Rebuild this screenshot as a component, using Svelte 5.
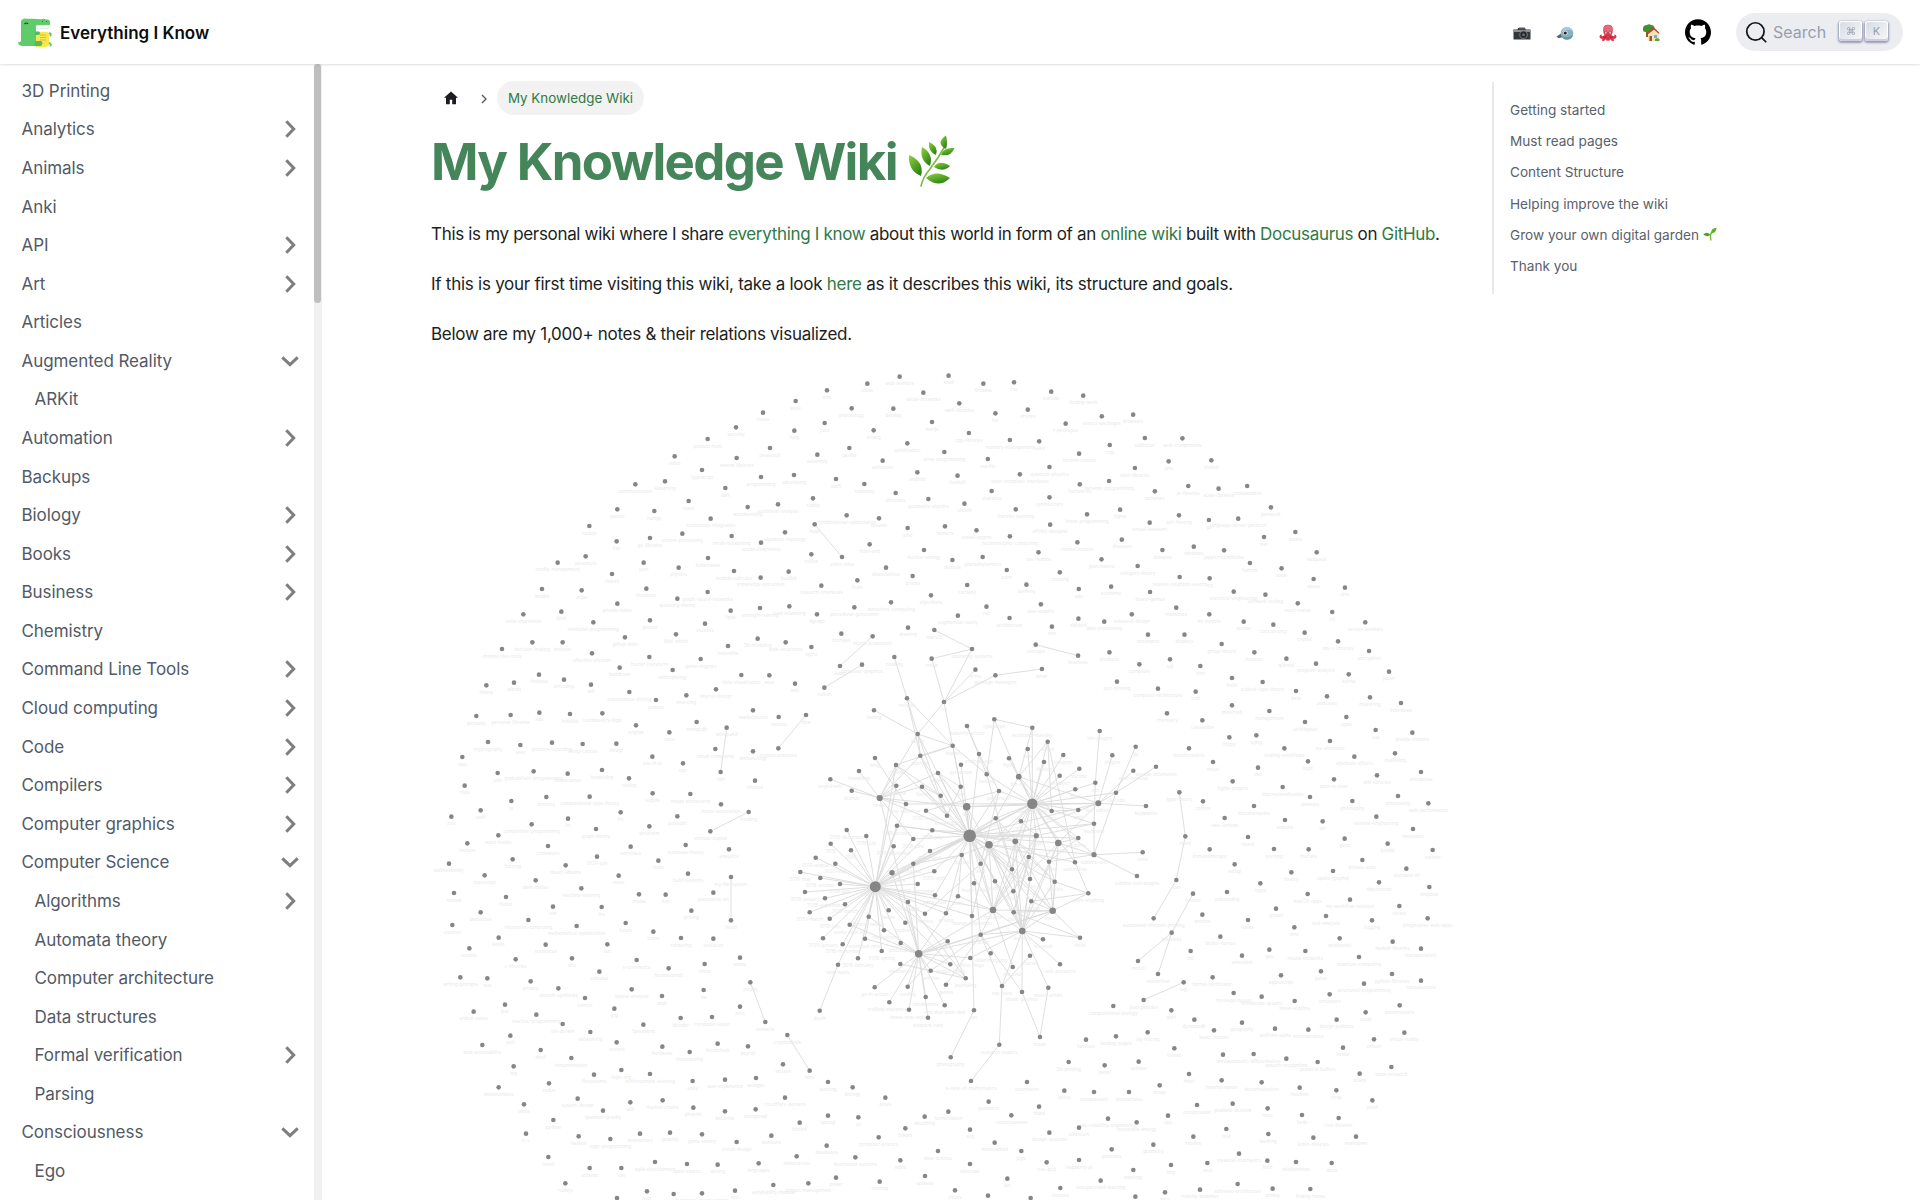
<script>
  // Sidebar entries: [label, state, depth]; state is '>' closed, 'v' open, '' for a leaf page.
  const pages = [
    ['3D Printing', '', 0], ['Analytics', '>', 0], ['Animals', '>', 0], ['Anki', '', 0],
    ['API', '>', 0], ['Art', '>', 0], ['Articles', '', 0], ['Augmented Reality', 'v', 0],
    ['ARKit', '', 1], ['Automation', '>', 0], ['Backups', '', 0], ['Biology', '>', 0],
    ['Books', '>', 0], ['Business', '>', 0], ['Chemistry', '', 0], ['Command Line Tools', '>', 0],
    ['Cloud computing', '>', 0], ['Code', '>', 0], ['Compilers', '>', 0], ['Computer graphics', '>', 0],
    ['Computer Science', 'v', 0], ['Algorithms', '>', 1], ['Automata theory', '', 1],
    ['Computer architecture', '', 1], ['Data structures', '', 1], ['Formal verification', '>', 1],
    ['Parsing', '', 1], ['Consciousness', 'v', 0], ['Ego', '', 1]
  ];

  const toc = ['Getting started', 'Must read pages', 'Content Structure', 'Helping improve the wiki', 'Grow your own digital garden', 'Thank you'];

  // Notes of the outer ring, grouped by sector. Each entry is "x y name" in sector units.
  const sectors = [
    { x: 430, y: 360, sx: 3, sy: 3, notes: `1409 50 web-workers,1312 71 cities,1191 91 cms,1097 123 work,999 158 russia,918 202 security,833 237 product-hunt,734 289 video,616 373 communication,705 364 streaming,816 330 typescript,920 294 swarm-libraries,1020 264 javascript,1093 212 ruby,1184 189 julia,1265 145 psychology,1390 146 datalog,1480 98 social-networks,1506 186 nextjs,1331 211 erlang,1432 250 serialization,1258 264 gatsby,1162 284 assembly,1358 302 antimatter,1543 276 array-programming,1462 337 android,1303 372 rabbitmq,1218 357 swift,1092 345 advertising,993 351 programming,886 384 dart,776 423 react,673 453 numpy,562 448 planes,478 498 nodejs,560 544 lisp,660 534 go-libraries,757 521 stream-processing,842 476 continuous-integration,953 441 woodworking,1044 433 sentiment-analysis,1149 415 caddy,1397 399 directors,1495 417 geometric-algebra,1250 466 combinational-optimization,1347 475 russian,1433 504 amd,1545 499 humans,1154 493 hugo,1236 591 static-sites,1319 553 front-end,1065 517 algebraic-topology,993 548 xcode-extensions,905 528 mesh-networking,834 594 kubernetes,746 623 physics,641 608 json,467 589 adventure,383 608 config-management,546 642 clojure,455 691 expo,336 687 webkit,280 763 voice-assistance,394 755 blink,562 731 private-notes,649 686 mentions,742 716 queueing-theory,833 696 graph-neural-networks,912 633 lambda-calculus,992 653 knowledge-extraction,1076 635 buildkit,1144 583 coffee,1482 570 nuclear-energy,1368 623 dissociatives,1448 648 prisma,1282 661 fruits,1174 677 research-chemicals,1503 706 algorithms,1383 727 serverless-computing,1273 742 procedural-generation,1161 763 dgraph,1078 739 load-balancing,990 744 strength-training,902 752 fpga,825 791 success,738 823 little-snitch,660 781 gentoo,490 787 relational-programming,585 832 github-bots,398 847 phoenix,307 847 decision-making,216 867 chrome-dev-tools,486 880 effective-altruism,658 891 fourier-transform,812 897 game-engines,894 858 instantlite,983 836 3d-modeling,1067 847 data-structures,1144 861 nginx,1234 821 biomass,1434 803 drawing,1328 829 music-production,1230 918 audio,1296 914 computer-graphics,1183 983 vulkan,1513 810 macOS,1505 896 nmap,1393 891 cooking,1095 971 wiki,1018 946 avex,934 945 data-visualization,728 930 anthropology,569 923 buddhism,402 959 encoding,327 944 firebase,252 968 wikidq,169 976 hiking,483 974 wifi,858 988 interior-design` },
    { x: 930, y: 360, sx: 2.904, sy: 3, notes: `54 47 shell,155 71 firebase,244 67 rss,352 95 canada,445 107 finding-work,85 130 swift-libraries,190 160 lux,284 149 drones,394 191 r-packages,499 169 emacs-packages,590 164 browsers,113 219 cpp-libraries,232 240 memory-management,317 244 haiku,522 255 cnjs,624 234 addiction,733 235 web-components,433 281 version-control,168 297 nutrilio,347 321 quantum-physics,595 324 elixir-libraries,693 304 pho,817 301 visited,80 347 haskell,261 343 brain-computer-interfaces,435 373 fuchsia-os,520 363 dynamic-programming,179 393 statistics,347 412 synthesizers,653 394 rectorsec,750 378 js-libraries,838 386 scala-libraries,921 378 codesandbox,100 431 sketch,249 448 transfer-learning,456 463 linear-programming,552 449 figma,723 466 self-hosting,810 480 go,895 476 language-server-protocol,990 442 jamstack,135 511 unreal-engine,349 494 affinity-designer,638 488 virtual-assistant,232 529 neuromorphic-computing,428 547 mental-models,557 539 diseases,970 531 osx,1061 516 books,65 600 devices,153 591 phenethylamines,315 577 css-flexbox,675 570 domains,766 560 windows,854 571 jupyter-notebooks,1123 577 webpack,498 598 governance,603 618 category-theory,929 609 fathom,1021 625 dask,223 630 color,377 637 zooning,725 651 nearest-neighbor-search,812 655 tcp,1114 657 space,108 675 cardano,280 674 banking,432 687 edo,526 680 economy,1205 683 unix,639 696 board-games,882 695 electrical-engineering,974 704 software-testing,164 740 zsh,322 733 aws-amplify,1068 730 react-native,1168 756 tcl,715 743 memories,81 767 augmented-reality,231 774 architecture,431 776 shaders,506 785 data-processing,586 763 industrial-design,811 763 ml-models,911 785 docker,997 794 concurrency,1264 787 service-workers,354 800 dna,633 824 nootropics,739 824 displays,1088 818 crystal,1185 844 obj-c-libraries,307 854 startups,430 887 business,847 852 group-theory,122 867 operating-systems,521 877 products,942 877 notation,1275 873 encryption,697 898 sql,1035 896 queries,1121 911 program-analysis,608 913 compilers,785 918 zinc,132 929 lamia,325 927 brew,190 946 package-managers,877 954 trello,1216 943 kernel,1333 935 japan,966 966 cubical-type-theory,543 965 pen-plotting,662 986 computer-architecture` },
    { x: 430, y: 690, sx: 3, sy: 3, notes: `598 6 autonomous-driving,678 30 politics,769 16 investing,139 78 germany,242 75 personal-libraries,328 68 ada,420 72 hotellist,517 70 combinatory-logic,618 106 english,718 127 rocs,800 96 mongodb,890 113 wireguard,969 61 marketplaces,1046 81 tattoos,1128 75 libra,174 156 cryptography,271 165 java,366 158 process-recording,458 162 along-coreos,559 161 dvwgi,97 201 aoo,667 200 css-in-js,759 220 ego,856 177 cloud-computing,969 184 immunology,1045 175 cryptocurrencies,203 249 elm,311 244 probabilistic-programming,413 251 nanoscience,516 240 leadership,597 265 vuelog,872 246 vpn,975 272 clothes,104 287 rfids,668 310 svgtile,781 312 image-processing,244 333 qt,349 321 postrice,479 320 computational-type-theory,873 343 home-automation,152 361 swift,64 380 zsls,414 386 iot,572 367 irc,742 379 polkadot,956 366 funding,305 403 competitive-programming,498 417 graph-theory,658 409 terraform,841 424 venture-capital,205 436 react-hooks,112 460 rockets,354 468 containers,602 470 exercises,767 465 automata-theory,897 478 analytics,248 508 fuzzing,501 500 2020-july,685 512 redis,57 521 webassembly,407 526 music-albums,164 556 purescript,566 557 nixos,774 551 build-systems,903 561 my-file-system,317 571 dark-matter,454 595 machine-learning,72 609 nomad,627 613 media,707 614 lisn,850 608 generative-art,228 621 flutter,369 650 ssh,515 651 lira,784 662 pricing,152 667 deduction,295 690 interactive-computing,903 691 hazel,67 705 election,440 708 mathematical-optimization,587 699 future,670 725 icons,206 743 kotlin,753 744 rendering,850 746 evolution,118 775 ansible,347 764 sentences,532 763 lex,257 808 c-libraries,426 805 dns,620 810 e-commerce,930 803 anime,716 835 foundationdb,824 822 virtue,508 845 calculus,91 862 writing-prompts,172 865 rust,302 874 privacy,961 877 events,385 895 speech-synthesis,605 898 spatial-analysis,821 900 tla,696 918 mqtt,465 924 cancer,225 944 jest,930 950 arkit,553 956 jpg,131 965 united-states,319 974 reactive-programming,752 984 blender,846 981 computer-vision,398 1002 ios-derwin,640 1004 1password,1006 996 contacts,481 1026 networking,241 1037 perl,1072 1035 cryptominds,157 1065 web-accessibility,560 1057 vectors,697 1070 hardware,863 1061 blockchain,954 1069 payroll,332 1080 dhall,779 1086 microdosing,424 1104 documentation,1059 1123 viruses,251 1129 big,574 1140 logic-org,492 1154 filesystems,660 1152 reinforcement-learning,788 1173 unity,885 1169 user-experience,978 1164 webgpu,357 1180 redux,206 1192 bookmarklets,1065 1223 cloudflare-workers,443 1226 system-design,601 1237 wifi,698 1231 markov-chains,282 1243 taxes,790 1253 phoenix,519 1262 quantum-gravity,885 1264 batteries,977 1258 postgresql,370 1290 python,1109 1298 bitcoin,288 1331 c++,446 1339 haskell,541 1347 logic-programming,630 1331 newsletters,720 1328 graphql,816 1333 game-theory,1024 1337 sismetrix,920 1356 circuit-design,355 1401 travel,1100 1399 tailwind-css,479 1434 scheme,574 1434 css,675 1416 agile-development,771 1422 open-source,863 1424 writing,986 1420 languages,406 1480 nodejs,1030 1485 satisfiability-modulo,651 1504 rsdz,915 1502 rust,731 1512 vim,816 1510 functional-programming,561 1524 linux` },
    { x: 1140, y: 690, sx: 3, sy: 3, notes: `167 5 crdt,468 3 beta,561 19 podcasts,690 22 mastering,783 39 interviews,81 70 chemistry,276 46 minecraft,388 63 management,187 91 cassandra,495 96 activitypub,619 81 agda,707 120 vue,817 128 google-chrome,268 142 trippy,349 136 aging,570 153 ios-shortcuts,147 175 bioinformatics,433 175 making-workflows,765 190 marketing,643 200 algebraic-effects,219 216 metal,504 214 logic,354 233 css,843 246 wordpress,711 256 elm-libraries,582 268 peer-to-peer,278 274 figma-plugins,428 291 internationalization,118 307 type-theory,510 321 datasets,774 318 processing,189 334 comics,637 333 philosophy,865 340 web-performance,342 348 documentaries,254 384 aws-lambda,709 380 reverse-engineering,435 390 arduino,548 394 tax,819 417 mastodon,136 439 imeni,324 441 neo4j,614 446 geod,743 461 gatsby,209 478 immunotherapy,402 477 learning,506 478 fractals,878 480 outliner,667 510 private-suite,284 523 webgl,799 536 standard-ml,579 543 apollo-graphql,454 547 history,109 570 lean,361 580 logos,717 577 objectscript,868 591 dropbox,159 611 futures,261 606 onboarding,503 612 macOS-apps,630 629 my-workflow-notation,778 648 racket,408 656 groaci,187 674 articles,558 678 real-analysis,41 685 automated-theorem-proving,324 690 kafka,696 691 logging,863 685 progressive-web-apps,463 712 time,95 728 networks,241 740 bezier-curves,599 745 websocket,758 755 haskell-libraries,152 783 mit,388 779 gpu,496 783 neural-networks,843 776 transportation,306 797 animation,657 801 quantum-computing,543 844 guitar,54 852 tensorflow,218 862 formal-verification,423 856 applescript,756 852 python-libraries,131 877 sap,672 881 structured-programming,843 872 consultancies,281 909 message-queue,365 920 knowledge-graphs,569 913 emulators,11 930 lysergamides,464 933 linear-algebra,779 946 presentations,94 961 iperf,677 967 study,163 989 dynamodb,306 998 geography,590 989 design-patterns,222 1021 basic-income,405 1016 wolfram-alpha,505 1019 microservices,793 1028 virtual-reality,23 1027 ray-tracing,702 1048 unison,103 1075 framer,609 1073 twitter,249 1094 drinks,341 1092 automatic-differentiation,439 1106 speech-recognition,533 1116 protocol-buffers,754 1131 roam-research,147 1152 hotel,659 1151 ocaml,245 1171 hammerspoon,365 1177 decentralization,59 1186 drugs,479 1193 freedom,589 1201 ocsp,697 1231 jekyll,278 1241 gradient-descent,171 1245 compression,383 1255 mice,486 1275 bash,84 1277 cpu,596 1284 rust-libraries,259 1317 rest,385 1332 bashing,160 1340 movies,520 1343 kotlin-libraries,648 1340 markdown,40 1364 geometry,297 1391 classical-mechanics,382 1412 forth,202 1419 saul,468 1416 relationships,575 1419 deno,93 1425 http,293 1482 software-architecture,398 1496 prolog,180 1499 making-websites,511 1497 finding-home,75 1507 pico` },
    { x: 790, y: 990, sx: 3, sy: 3, notes: `59 242 html,114 276 dancing,188 292 biology,286 323 pirsls,888 149 furniture,978 139 landing-pages,836 216 3d-printing,944 226 bazel,1046 215 scholar,711 276 automation,823 302 valves,912 306 compression,1017 306 prometheus,596 335 genomics,747 350 clubs,475 365 fermentation,664 376 consciousness,404 380 sketching,205 382 cli,114 377 opengl,346 415 linkers,540 419 svg,954 386 site-reliability-engineering,1040 397 renewable-energy,867 413 ethereum,778 428 design-systems,266 442 computer-science,614 458 memcached,110 467 databases,694 483 pgtc,444 483 data-science,965 478 gamedev,196 502 distributed-systems,331 511 sqlite,540 522 inkscape,770 517 css-grid,867 510 raspberry-pi,1030 540 topology,138 563 power,405 558 updates,55 580 project-management,269 575 running,652 566 tax,932 572 unsupervised-learning,811 594 courses,495 601 chess,594 617 go,722 624 math,1036 620 music` }
  ];

  const notes = sectors.flatMap((s) =>
    s.notes.split(',').map((line) => {
      const [x, y, name] = line.trim().split(' ');
      return { x: s.x + x / s.sx, y: s.y + y / s.sy, name };
    })
  );

  // Linked notes in the middle: "x y name radius".
  const core = `907 698.3 recipes,944 702 nix,874 710.3 fasting,917.7 734 health,952.7 745.7 vogues,967 726 butterfly-school,979 754 podcast-app,920.3 755.7 nutrition,961 764.7 gyroscope,896 765 cycling,875 758 blog,938 773 looking,859 771 travelblog,830.3 779.3 englishwiki,851.7 790.7 biohub,896.3 785.7 medicine,922 786.7 focus,960.7 786.7 note,940.7 795.7 ideas,879.7 798 health 3.1,906 804 my-workflow,966.7 806.7 wiki 3.8,926 810.7 2018-august,947 815.7 knowledge,969.7 835.7 journal 6.3,989 844.7 ios 3.8,995.7 818.3 tools,999 791 powerlevel,897 825.7 2018-october,932.3 830.3 2018-july,913.3 839 2018-june,893.7 846.3 2018-december,930 851 2020-april,961.7 855 quotes,846.7 830 2018-december,866.3 836 2019-july,830.7 843.7 2019,851 850.3 2020,815.7 857.7 2019-august,994.3 719.3 typescript,986.7 774.3 fantasy,1032.3 727.7 keyboard-maestro,1047.7 741.7 alfred,1027.7 749 mpv,1009 758.3 figma,1044 762 discord,1063.3 755 telegram,1079.3 768.7 vscode,1059.7 775.7 karabiner,1018.7 776.7 tim-reh 2.9,1075.3 789.3 bear,1095.3 782.7 vim,1099.7 731 vim-plugins,1112.3 755.3 plugins,1135.7 746.7 go,1133.3 770.7 sync-hotkeys,1156 766.7 vscode-extensions,1116 792.7 vs-code,1098.3 803.3 text-editors 3,1032.3 803.7 macOS-apps 5.2,1146 806 keyboards,1051.7 811 trace,1078.3 810 unix,1021 821.3 github,1094 823.7 keyboard,1036.3 835.7 design 2.6,1015.3 841.3 apps 2.9,1058.3 843 ios-apps 3.3,1078.3 838 sublime,1028.7 857 editors,1094 854.7 sublime-text 2.6,1142.7 852.3 latex,835.3 863.7 2020-may,800.3 872 2019-may,820.3 878 2018-october,840 884 2019-june,875.3 886.7 looking-back 5.5,892 872.7 2018-books 2.7,913.3 863.7 movies,934.3 871.3 2020-april,917.7 884 2019-december,805 892 2019-january,825 898.3 2018-september,845 904.3 2019-march,908 902 2019-april,935 895.3 apps-i-use,958 896.3 email,974 883.3 music-i-like,980.7 863.7 work,995 881.3 reading,993 910 research 3.3,972 916 design-inspiration,946 913.3 writing,925 913.7 curious,888.7 910.3 habits,868.7 916.7 twenty-twenty,809.7 912.3 2020-march,829.7 918.7 2018-july,849.7 924.7 sanity-educate,905.3 922.7 podcasts,884 930.3 meditation,865 938.7 extended-mind,900.7 943 philosophy,823 938.3 2020-january,842.7 944.3 2018-november,881.7 951 2018-spring,858 958.3 2019-february,838 964.7 alan-watts,918.7 953.7 books 3.8,947.7 941.3 2018,980.7 934.7 articles,990.7 953.3 video-blogging,970.3 958 online-blogs,950.3 964.3 quotes-citing,930.7 970.7 articles,900.3 964 meditation,965.7 978.3 journaling,946 984.7 games,907.7 986.7 reading,874.7 987.3 go-in-action,925.7 997 mindstorms,889.3 1002.3 crafting-interpreters,909 1009.7 brave-new-world,944.7 1005.3 rich-dad-poor-dad,928 1017.7 eloquent-ruby,974 1010.3 art,819.7 1010.7 death,1049 861.7 sublime,1075 862.3 automation,1012 869.3 sharing,1030 879 notes,1054.7 881.7 articles,1013.3 891.3 blogs,1031.3 901.3 courses,1013.7 912.3 ideas,1052.7 910.7 macOS 3.3,1088.3 893.3 learn-anything,1022.3 931 learning 3.3,1080 937.7 trello,1043 939.3 research,1060 964.3 web-presence,1030 955.7 courses,1012.7 967 my-code,1002 986 soy-traits,1022 992 music-playlists,1048.3 987.7 music-artists,1137 876 sublime-text-plugins,1113.3 1006 computational-biology,1138 961 model,950.7 1057.3 photography,999.3 1044.7 research-papers,971 1081 a-view-of-mathematics,1040 1037 music`
    .split(',')
    .map((line) => {
      const [x, y, name, r] = line.split(' ');
      return { x: +x, y: +y, name, r: r ? +r : 2.3 };
    });

  // Adjacency of the linked notes, by position in the list above.
  const adjacency = {
    24: '21 17 18 11 23 22 16 29 30 32 33 28 77 76 78 79 25 66 65 26 27 59 88 89 91 85 6 7 3 67 58 131 90 134 110 64 68 8 125',
    76: '34 35 36 37 38 72 73 74 75 81 82 83 96 97 98 103 104 106 107 95 101 100 105 94 102 99 84 93 92 85 80 79 78 77 31 30 28 20 15 32 29 109 91 90 9 59 25 26',
    59: '41 42 43 44 45 46 47 48 49 50 51 57 58 61 62 63 64 65 66 26 27 40 21 25 67 68 70 20 129 88 131 69 128 78',
    108: '77 78 84 95 98 101 102 109 110 90 112 113 114 118 119 121 122 120 123 124 116 137 135 19 86',
    137: '25 66 129 130 132 133 134 135 131 110 139 140 145 143 144 138 67 65 90 24',
    135: '67 66 25 24 136 133 134 138 131 127 90 110',
    90: '25 66 33 67 65 129 69 142 86 110 21',
    58: '60 53 55 49 67 25 21 57',
    57: '54 56 70',
    51: '52 64',
    70: '64 71 146 127 67 25',
    19: '13 14 12 3 9 7 11 16 21 20 30 15 24',
    3: '0 7 4 2 23 1',
    4: '0 7 40 9 17',
    1: '17',
    7: '0 23',
    39: '41 40 49',
    49: '41 42 26 67 61',
    5: '6 40', 10: '20', 9: '23 18', 11: '21 17', 6: '27', 17: '23', 16: '18 23',
    125: '149', 150: '143 151', 152: '144 145', 126: '107',
    143: '110 141', 144: '110', 116: '84 109 114', 114: '115 110', 117: '110', 118: '109',
    136: '128 133 131', 138: '134', 33: '78 86 92', 129: '24 26 66', 132: '69 21 25', 130: '66 65',
    131: '69 26', 127: '68 66', 133: '67 25', 134: '69 65', 91: '25', 65: '29 63 64', 128: '25 42',
    68: '67', 61: '62 42', 28: '29', 22: '27', 40: '129', 113: '76', 112: '137', 88: '93 27'
  };
  const links = Object.entries(adjacency).flatMap(([from, to]) =>
    to.split(' ').map((t) => [core[from].x, core[from].y, core[t].x, core[t].y])
  );

  // Small separate chains around the middle.
  const chains = [
    [814.7, 524.3, 842, 557], [872.7, 636.3, 840, 666], [862, 664.7, 824.3, 687.7],
    [894.3, 657, 907, 698.3], [934.3, 630, 972, 649], [931.7, 658.7, 972, 649],
    [931.7, 658.7, 944, 702], [972, 649, 944, 702], [975.5, 669.7, 944, 702], [995.4, 675.3, 944, 702],
    [995.4, 675.3, 1041.9, 669], [1035.7, 644.7, 1078, 655.7], [806, 715, 778.3, 748.3],
    [726.7, 727.7, 720.7, 772], [748.7, 812, 710.3, 831.3], [731, 877, 731, 920.3],
    [750.3, 982.3, 765.3, 1022], [787.3, 1035, 809.7, 1070.7], [1179.3, 792.3, 1185.3, 836.3],
    [1185.3, 836.3, 1176.3, 880], [1176.3, 880, 1153.7, 918.3], [1193, 893.7, 1171.7, 932.7],
    [1171.7, 932.7, 1138, 961], [1171.7, 932.7, 1158, 974], [1183.7, 982.3, 1143.7, 1000]
  ];
  const edges = [...links, ...chains];
</script>

<header class="navbar">
  <a class="brand" href="#top">
    <svg class="logo" viewBox="0 0 34 30" width="34" height="30">
      <path d="M3 4Q3 1 5 1.200 6 0 8 .8h6l9 .4q3-1 5 .3 4-.5 4 2.500v3H21q-3 1-3 4v10l6 4-3 3H5q-5 0-5-4 2 .5 3-1Z" fill="#60cb6b" />
      <path d="M18 14h11q2 0 2 3v9q0 3-4 3h-9Z" fill="#f6e84d" />
      <path d="M22 17h6M22 19.500h6M22 22h6" stroke="#d8b63a" stroke-width=".9" />
      <path d="M18 8l1-1 1.500 1 1.500-1 1.500 1 1.500-1 1.500 1 1.500-1 2 1v2.500H19q-1-1-1-2.500Z" fill="#fff" stroke="#c9d9cb" stroke-width=".5" />
      <path d="M6.500 6q2-2 3.500 0" fill="none" stroke="#1b3b1e" stroke-width="1.200" />
      <path d="M24 3.500h1M28 3.500h1" stroke="#2d8138" stroke-width="1" />
      <path d="M17 13.500h4q2 1.500 0 3.500h-4ZM17 23h6q3 2 0 5h-7Z" fill="#52bd5f" />
      <path d="M31 15q3 1 1 3M31 25q3 1 1 3" stroke="#60cb6b" stroke-width="2" fill="none" />
    </svg>
    <span>Everything I Know</span>
  </a>
  <nav class="tools">
    <svg class="emoji" viewBox="0 0 18 18" width="18" height="18">
      <path d="M.5 5.500h4L5 4h7l.8 1.500H17q.5 0 .5.500v9q0 .5-.5.500H1q-.5 0-.5-.5Z" fill="#34373a" />
      <path d="M.5 6h17v2H.5Z" fill="#8d9194" /><path d="M6 3.500h6v2H6Z" fill="#55585b" />
      <circle cx="10.500" cy="10.700" r="4.300" fill="#74777a" /><circle cx="10.500" cy="10.700" r="3.200" fill="#25272a" /><circle cx="10.500" cy="10.700" r="1.500" fill="#62686f" />
    </svg>
    <svg class="emoji" viewBox="0 0 18 18" width="18" height="18">
      <path d="M.5 12.500 6 9l1.500 4-5 1.300Z" fill="#58646c" />
      <circle cx="11" cy="9.300" r="6.300" fill="#86b1bf" /><path d="M5 9q2-6 7-6 4 1 5 5-2-3-6-2-4 1-6 3Z" fill="#a9ccd6" />
      <path d="M5.500 12q5 3 11.500-1-1 4.500-6 4.700-4 0-5.500-3.700Z" fill="#6797a8" />
      <circle cx="9.500" cy="9" r="2.200" fill="#e4ecee" /><circle cx="9.300" cy="9" r="1.500" fill="#1d2327" />
    </svg>
    <svg class="emoji" viewBox="0 0 18 18" width="18" height="18">
      <path d="M9 .8q5 0 4.800 5 0 3-1.300 5.200 1 1.500 3 1l-.3-1.500q2.300 0 2.300 2T14.500 15q1 1 .3 2-2 .5-3.300-1.800Q10 17.500 9 16.500 8 17.500 6.500 15.200 5.200 17.500 3.200 17q-.7-1 .3-2Q.5 14.500.5 12.500t2.300-2L2.500 12q2 .5 3-1Q4.200 8.800 4.200 5.800 4 .8 9 .8Z" fill="#d9374b" />
      <path d="M9 1q4.500 0 4.300 4.500Q13 8 9 8T4.700 5.500Q4.500 1 9 1Z" fill="#e5697a" />
      <circle cx="7" cy="9" r="1" fill="#fff" /><circle cx="11" cy="9" r="1" fill="#fff" /><circle cx="7.100" cy="9.100" r=".6" fill="#222" /><circle cx="10.900" cy="9.100" r=".6" fill="#222" />
      <path d="M4 13q3 2 3-1M14 13q-3 2-3-1" stroke="#9f1b35" stroke-width=".8" fill="none" />
    </svg>
    <svg class="emoji" viewBox="0 0 18 18" width="18" height="18">
      <path d="M4 8h2v5H4Z" fill="#8a5a36" /><path d="M1 4.500Q1 1 5 1q2-1.500 4 0 3 0 3.500 3L9 8H3Q.5 7.500 1 4.500Z" fill="#43902c" />
      <path d="M6 9l6-4.500L17 9v8H6Z" fill="#f6e5b8" /><path d="M4.800 9.500 11 4l1-.5L17.500 9l-.8.8L12 5.500 5.600 10.500Z" fill="#c3372c" />
      <path d="M7.500 12h2.500v5H7.500Z" fill="#9a5a30" /><path d="M12 11h3v3h-3Z" fill="#6cb2d6" />
      <path d="M13 15q2-1.500 4.500 0V17H13Z" fill="#58a635" />
    </svg>
    <svg class="github" viewBox="0 0 24 24" width="26" height="26"><path d="M12 .297c-6.630 0-12 5.373-12 12 0 5.303 3.438 9.800 8.205 11.385.6.113.82-.258.82-.577 0-.285-.01-1.040-.015-2.040-3.338.724-4.042-1.610-4.042-1.610C4.422 18.070 3.633 17.700 3.633 17.700c-1.087-.744.084-.729.084-.729 1.205.084 1.838 1.236 1.838 1.236 1.070 1.835 2.809 1.305 3.495.998.108-.776.417-1.305.76-1.605-2.665-.3-5.466-1.332-5.466-5.930 0-1.310.465-2.380 1.235-3.220-.135-.303-.54-1.523.105-3.176 0 0 1.005-.322 3.300 1.230.96-.267 1.980-.399 3-.405 1.020.006 2.040.138 3 .405 2.280-1.552 3.285-1.230 3.285-1.230.645 1.653.24 2.873.12 3.176.765.84 1.230 1.910 1.230 3.220 0 4.610-2.805 5.625-5.475 5.920.42.36.81 1.096.81 2.220 0 1.606-.015 2.896-.015 3.286 0 .315.21.690.825.570C20.565 22.092 24 17.592 24 12.297c0-6.627-5.373-12-12-12" /></svg>
    <button class="search">
      <svg viewBox="0 0 20 20" width="24" height="24"><path d="M14.386 14.386l4.088 4.088-4.088-4.088c-2.942 2.942-7.711 2.942-10.653 0s-2.942-7.711 0-10.653 7.711-2.942 10.653 0 2.942 7.711 0 10.653z" fill="none" stroke="#111418" stroke-width="1.500" stroke-linecap="round" /></svg>
      <span class="placeholder">Search</span>
      <kbd><svg viewBox="0 0 10 10" width="8" height="8"><path d="M3.500 3.500V2A1.500 1.500 0 1 0 2 3.500h6A1.500 1.500 0 1 0 6.500 2v6A1.500 1.500 0 1 0 8 6.500H2A1.500 1.500 0 1 0 3.500 8Z" fill="none" stroke="#969faf" stroke-width="1.100" /></svg></kbd>
      <kbd>K</kbd>
    </button>
  </nav>
</header>

<div class="layout">
  <aside class="sidebar">
    <ul>
      {#each pages as [label, state, depth]}
        <li class:nested={depth === 1}>
          <span>{label}</span>
          {#if state}
            <svg class:open={state === 'v'} viewBox="0 0 20 20" width="20" height="20"><path d="M6.300 2.300 13.700 10l-7.400 7.700" fill="none" stroke="#7e7e7e" stroke-width="3" /></svg>
          {/if}
        </li>
      {/each}
    </ul>
    <div class="track"><div class="thumb"></div></div>
  </aside>

  <main>
    <nav class="crumbs">
      <svg class="home" viewBox="0 0 14 14" width="14" height="14"><path d="M7 .4 0 6.800h2V13.300h3.800V8.800h2.400v4.500H12V6.800h2Z" fill="#1c1e21" /></svg>
      <svg class="sep" viewBox="0 0 6 10" width="6" height="10"><path d="M1 1l4 4-4 4" fill="none" stroke="#555" stroke-width="1.300" /></svg>
      <span class="pill">My Knowledge Wiki</span>
    </nav>
    <h1>
      <span>My Knowledge Wiki</span>
      <svg class="herb" viewBox="0 0 47 52" width="47" height="52">
        <defs>
          <linearGradient id="leaf" x1="0" y1="0" x2=".6" y2="1"><stop offset="0" stop-color="#8fd43b" /><stop offset="1" stop-color="#2f8417" /></linearGradient>
        </defs>
        <path d="M13 51q2-9 9-17Q31 22 37 11" fill="none" stroke="#7fb848" stroke-width="1.600" stroke-linecap="round" />
        <g fill="url(#leaf)">
          <path d="M38 14Q27 8 38 .5 40 8 38 14Z" /><path d="M33 20Q35 12 46.500 13 43 22 33 20Z" />
          <path d="M28 20Q20 17 21 7 31 11 28 20Z" /><path d="M22 31Q11 25 14 12 26 19 22 31Z" />
          <path d="M26 32Q31 24 42 31 35 38 26 32Z" /><path d="M13 41Q0 36 1 20 17 27 13 41Z" />
          <path d="M18 43Q28 34 42 43 31 54 18 43Z" />
        </g>
      </svg>
    </h1>
    <p class="p1">This is my personal wiki where I share <a href="#know">everything I know</a> about this world in form of an <a href="#wiki">online wiki</a> built with <a href="#docusaurus">Docusaurus</a> on <a href="#github">GitHub</a>.</p>
    <p class="p2">If this is your first time visiting this wiki, take a look <a href="#here">here</a> as it describes this wiki, its structure and goals.</p>
    <p class="p3">Below are my 1,000+ notes &amp; their relations visualized.</p>

    <svg class="graph" viewBox="431 360 1040 840" width="1040" height="840">
      <g class="edges">
        {#each edges as [x1, y1, x2, y2]}
          <line {x1} {y1} {x2} {y2} />
        {/each}
      </g>
      <g class="labels">
        {#each [...notes, ...core] as n}
          <text x={n.x} y={n.y + 8.8}>{n.name}</text>
        {/each}
      </g>
      <g class="dots">
        {#each notes as n}<circle cx={n.x} cy={n.y} r="2.300" />{/each}
        {#each core as n}<circle cx={n.x} cy={n.y} r={n.r} />{/each}
      </g>
    </svg>
  </main>

  <aside class="toc">
    <ul>
      {#each toc as item, i}
        <li>
          {item}
          {#if i === 4}
            <svg viewBox="0 0 14 14" width="14" height="14"><path d="M8 13.500Q6.500 9 8.500 5" stroke="#6fb72d" stroke-width="1.200" fill="none" /><path d="M8 6.500Q8 1 13.500.8 13.500 6 8 6.500Z" fill="#5cb421" /><path d="M7.500 8Q4 4 .3 7.500 4 10.500 7.500 8Z" fill="#4aa31a" /></svg>
          {/if}
        </li>
      {/each}
    </ul>
  </aside>
</div>

<style>
  :global(body) { background: #fff; overflow: hidden; font-family: Inter, "Liberation Sans", sans-serif; color: #1c1e21; }
  a { color: #2f7a45; text-decoration: none; }
  ul { list-style: none; margin: 0; padding: 0; }
  .navbar { position: relative; z-index: 1; display: flex; justify-content: space-between; align-items: center; box-sizing: border-box; height: 64px; padding: 0 17px 0 18px; background: #fff; box-shadow: 0 1px 2px rgba(0, 0, 0, 0.13); }
  .brand { display: flex; align-items: center; gap: 8px; padding-top: 1px; color: #0c0d0e; font-size: 17px; font-weight: 600; white-space: nowrap; }
  .tools { display: flex; align-items: center; }
  .emoji { margin: 2px 25px 0 0; }
  .github { margin: 0 25px 0 0; }
  .search { display: flex; align-items: center; width: 167px; height: 38px; box-sizing: border-box; padding: 0 0 0 9px; border: 0; border-radius: 19px; background: #ebedf0; color: #969faf; font-family: inherit; font-size: 16px; }
  .placeholder { width: 71px; flex: none; box-sizing: border-box; padding-left: 5px; text-align: left; }
  .search > svg { flex: none; width: 23px; height: 23px; }
  kbd { display: flex; flex: none; align-items: center; justify-content: center; width: 23px; height: 20px; margin: 0 3px 3px 0; border-radius: 3px; background: linear-gradient(-225deg, #d5dbe4, #f8f8f8); box-shadow: inset 0 -2px 0 #cdcde6, inset 0 0 1px 1px #fff, 0 1px 2px 1px rgba(30, 35, 90, 0.4); font-family: inherit; font-size: 11px; }
  .layout { display: flex; height: 1136px; }
  .sidebar { display: flex; justify-content: space-between; flex: none; width: 322px; overflow: hidden; }
  .sidebar ul { flex: 1; padding: 7.500px 14px 0 21.500px; }
  .sidebar li { display: flex; align-items: center; justify-content: space-between; height: 38.580px; color: #525a66; font-size: 17px; letter-spacing: -0.06px; white-space: nowrap; }
  .sidebar li.nested { padding-left: 13px; }
  .open { transform: rotate(90deg); }
  .track { width: 8px; background: #f1f1f1; }
  .thumb { width: 7px; height: 239px; border-radius: 4px; background: #bfbfbf; }
  main { flex: none; width: 1061px; padding-left: 109px; }
  .crumbs { display: flex; align-items: center; height: 34px; padding: 17px 0 0 13px; }
  .home { margin-right: 23px; }
  .sep { margin: 2px 10px 0 0; }
  .pill { display: flex; align-items: center; justify-content: center; width: 147px; height: 34px; border-radius: 17px; background: #f2f2f2; color: #2f7a45; font-size: 13.400px; white-space: nowrap; }
  h1 { display: flex; align-items: center; height: 62px; margin: 15px 0 0; gap: 13px; color: #45855a; font-size: 51px; font-weight: 700; line-height: 62px; letter-spacing: -1.680px; white-space: nowrap; }
  h1 span { display: block; width: 464px; padding-top: 2px; }
  p { height: 28px; margin: 0 0 21.800px; font-size: 17px; line-height: 28px; white-space: nowrap; }
  .p1 { margin-top: 28px; letter-spacing: -0.325px; }
  .p2 { letter-spacing: -0.260px; }
  .p3 { margin-bottom: 12.400px; letter-spacing: -0.290px; }
  .graph { display: block; overflow: visible; }
  .edges { stroke: #dadada; stroke-width: 0.9; }
  .dots { fill: #868686; }
  .labels { fill: #e9e9e9; font-size: 4.600px; text-anchor: middle; }
  .toc { margin-top: 18px; width: 300px; height: 212px; border-left: 2px solid #e6ebea; box-sizing: border-box; }
  .toc ul { padding: 13px 0 0 16px; }
  .toc li { height: 31.200px; line-height: 31.200px; color: #59616c; font-size: 13.600px; white-space: nowrap; }
  .toc svg { vertical-align: -1px; }
</style>
